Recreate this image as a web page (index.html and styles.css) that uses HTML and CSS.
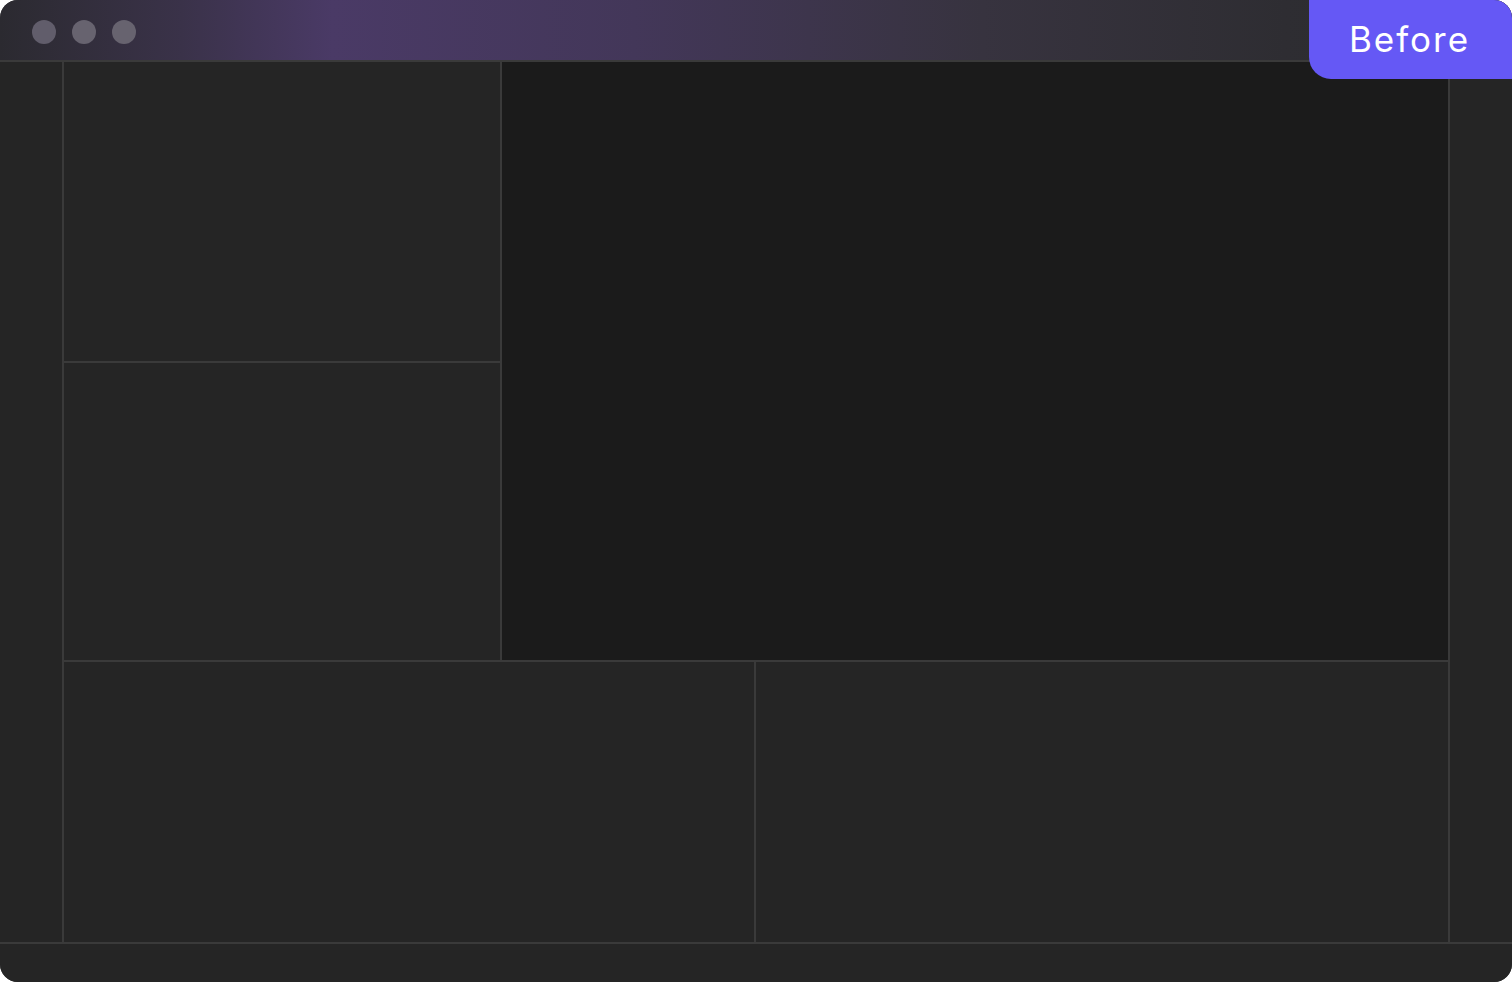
FILE: index.html
```html
<!DOCTYPE html>
<html>
<head>
<meta charset="utf-8">
<link rel="stylesheet" href="styles.css">
</head>
<body>
<div class="window">
  <div class="titlebar">
    <span class="dot dot-a"></span>
    <span class="dot"></span>
    <span class="dot"></span>
  </div>
  <div class="middle">
    <div class="side"></div>
    <div class="content">
      <div class="top">
        <div class="leftcol">
          <div class="panel"></div>
          <div class="panel"></div>
        </div>
        <div class="main"></div>
      </div>
      <div class="bottom">
        <div class="panel"></div>
        <div class="panel"></div>
      </div>
    </div>
    <div class="side"></div>
  </div>
  <div class="footer"></div>
  <div class="badge">Before</div>
</div>
</body>
</html>
```
FILE: styles.css
```css
html, body {
  margin: 0;
  padding: 0;
  background: #ffffff;
}
.window {
  position: relative;
  width: 1512px;
  height: 982px;
  border-radius: 18px;
  overflow: hidden;
  background: #3a3a3a;
  display: grid;
  grid-template-rows: 60px 880px 38px;
  row-gap: 2px;
}
.titlebar {
  background: linear-gradient(90deg, #2b2a30 0%, #3a3249 12%, #4a3a66 22%, #433759 42%, #37333f 65%, #2e2d32 85%, #2a2a2d 100%);
  display: flex;
  align-items: center;
  gap: 16px;
  padding-left: 32px;
  padding-top: 3px;
  box-sizing: border-box;
}
.dot {
  width: 24px;
  height: 24px;
  border-radius: 50%;
  background: #67636f;
}
.dot-a {
  background: #615d6b;
}
.middle {
  display: grid;
  grid-template-columns: 62px 1384px 62px;
  column-gap: 2px;
}
.side {
  background: #252525;
}
.content {
  display: grid;
  grid-template-rows: 598px 280px;
  row-gap: 2px;
}
.top {
  display: grid;
  grid-template-columns: 436px 946px;
  column-gap: 2px;
}
.leftcol {
  display: grid;
  grid-template-rows: 299px 297px;
  row-gap: 2px;
}
.panel {
  background: #252525;
}
.main {
  background: #1b1b1b;
}
.bottom {
  display: grid;
  grid-template-columns: 690px 692px;
  column-gap: 2px;
}
.footer {
  background: #252525;
}
.badge {
  position: absolute;
  top: 0;
  right: 0;
  width: 203px;
  height: 79px;
  background: #6558f5;
  border-bottom-left-radius: 22px;
  color: #ffffff;
  font-family: Inter, "Noto Sans", sans-serif;
  font-size: 35px;
  font-weight: 400;
  letter-spacing: 2px;
  display: flex;
  align-items: center;
  justify-content: center;
  padding-right: 2px;
  padding-bottom: 1px;
  box-sizing: border-box;
}
```
